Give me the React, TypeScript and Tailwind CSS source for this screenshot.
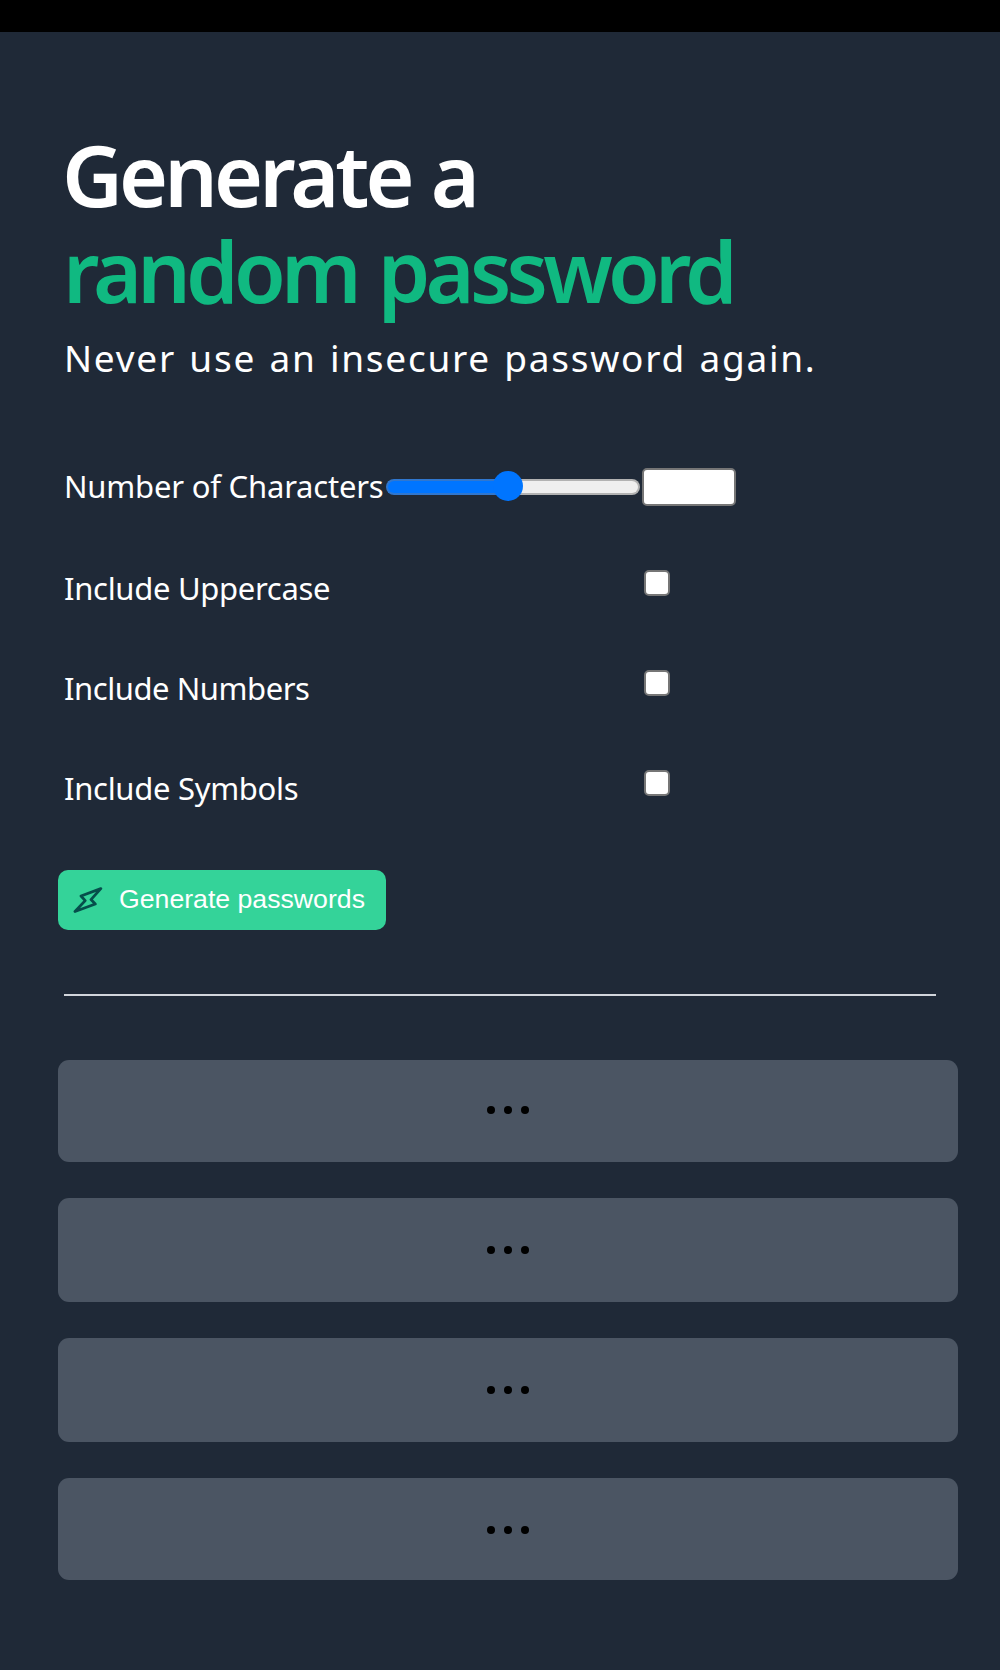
const options = [
  { label: "Include Uppercase", className: "tracking-[-0.3px]" },
  { label: "Include Numbers", className: "tracking-[-0.45px]" },
  { label: "Include Symbols", className: "tracking-[-0.3px]" },
];

const slots = [
  "h-[102px] pt-[46px]",
  "h-[104px] pt-12",
  "h-[104px] pt-12",
  "h-[102px] pt-12",
];

function Bolt() {
  return (
    <svg width="30" height="26" viewBox="0 0 30 26" fill="none" stroke="#064e4b" strokeWidth="2.8" strokeLinejoin="round">
      <path d="M27.8 1.6 L8 9 L12.2 13.6 L2 24.5 L22.3 17 L18 12.6 Z" />
    </svg>
  );
}

function Slider() {
  return (
    <div role="slider" aria-label="Number of Characters" aria-valuenow={10} className="relative flex h-4 w-[254px] overflow-visible">
      <div className="h-4 w-[122px] rounded-l-full border-2 border-r-0 border-[#3077cf] bg-[#0075ff]" />
      <div className="h-4 flex-1 rounded-r-full border-2 border-l-0 border-[#b2b2b2] bg-[#efefef]" />
      <div className="absolute -top-2 left-[107px] size-[30px] rounded-full bg-[#0075ff]" />
    </div>
  );
}

export default function App() {
  return (
    <div className="h-[1670px] w-[1000px] overflow-hidden border-t-[32px] border-black bg-[#1f2937] font-['Noto_Sans',sans-serif] text-white">
      <header className="pt-[95px] pl-16 whitespace-nowrap">
        <h1 className="-ml-0.5 text-[84px] leading-[96px] font-semibold">
          <span className="block tracking-[-3.9px] [word-spacing:2px]">Generate a</span>
          <span className="ml-px block tracking-[-4.8px] text-[#10b981] [word-spacing:4px]">random password</span>
        </h1>
        <p className="mt-[14px] text-[37px] leading-[50px] tracking-[1.75px] [word-spacing:2px]">Never use an insecure password again.</p>
      </header>

      <main>
        <div className="mt-[85px] flex h-[38px] items-center pl-16 text-[31px]">
          <span className="w-[322px] pb-0.5 tracking-[-0.2px] whitespace-nowrap">Number of Characters</span>
          <Slider />
          <input type="number" className="ml-0.5 h-[38px] w-[94px] rounded-[5px] border-2 border-[#767676] bg-white" />
        </div>

        <div className="mt-16 flex flex-col gap-[74px] pl-16 text-[31px]">
          {options.map((o) => (
            <label key={o.label} className="flex h-[26px] items-center">
              <span className={`w-[580px] pt-2.5 leading-none whitespace-nowrap ${o.className}`}>{o.label}</span>
              <input type="checkbox" className="size-[26px] appearance-none rounded-[5px] border-2 border-[#767676] bg-white" />
            </label>
          ))}
        </div>

        <button className="mt-[74px] ml-[58px] flex h-[60px] w-[328px] items-center rounded-[10px] bg-[#34d399] pl-[15px] font-['Liberation_Sans',sans-serif] text-[26.67px]">
          <Bolt />
          <span className="-mt-0.5 ml-4 whitespace-nowrap">Generate passwords</span>
        </button>

        <hr className="mt-16 ml-16 w-[872px] border-t-2 border-[#d1d5db]" />

        <div className="mt-16 ml-[58px] flex w-[900px] flex-col gap-9">
          {slots.map((slot, i) => (
            <div key={i} className={`flex justify-center gap-[9px] rounded-[11px] bg-[#4b5563] ${slot}`}>
              <span className="size-2 rounded-full bg-black" />
              <span className="size-2 rounded-full bg-black" />
              <span className="size-2 rounded-full bg-black" />
            </div>
          ))}
        </div>
      </main>
    </div>
  );
}
